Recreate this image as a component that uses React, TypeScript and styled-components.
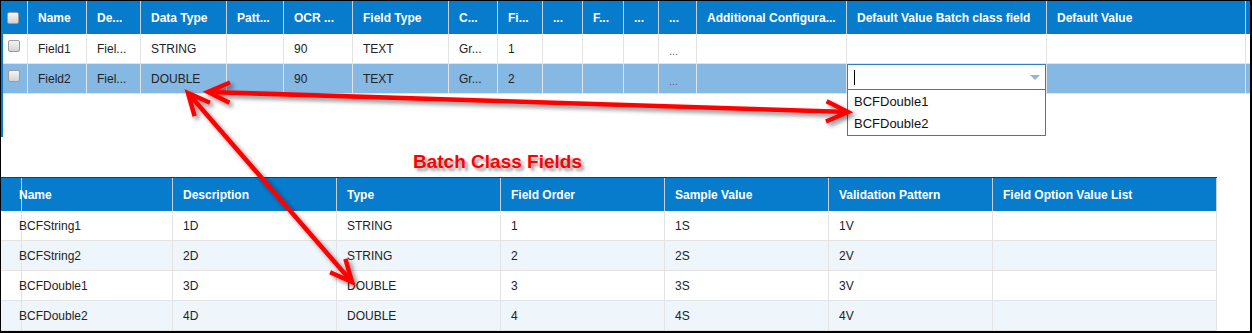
import React from "react";
import styled, { createGlobalStyle } from "styled-components";

const GlobalStyle = createGlobalStyle`
  html, body {
    margin: 0;
    padding: 0;
    background: #fff;
  }
  body {
    font-family: "Liberation Sans", Arial, sans-serif;
    font-size: 12px;
    color: #222;
  }
`;

const HEAD_BLUE = "#077bcc";
const LINE = "#e3e3e3";

const Frame = styled.div`
  position: relative;
  width: 1252px;
  height: 333px;
  box-sizing: border-box;
  border: 1px solid #000;
  border-right-width: 2px;
  border-bottom-width: 2px;
  background: #fff;
  overflow: hidden;
`;

const TopPanel = styled.div`
  height: 136px;
  box-sizing: border-box;
  border-left: 2px solid ${HEAD_BLUE};
`;

const GridRow = styled.div<{ $cols: string; $height: number; $bg?: string; $lined?: boolean }>`
  display: grid;
  grid-template-columns: ${(p) => p.$cols};
  height: ${(p) => p.$height}px;
  box-sizing: border-box;
  background: ${(p) => p.$bg || "#fff"};
  border-bottom: ${(p) => (p.$lined ? `1px solid ${LINE}` : "none")};
`;

const HeadCell = styled.div`
  display: flex;
  align-items: center;
  box-sizing: border-box;
  padding: 0 10px;
  border-right: 1px solid #c9cfd6;
  color: #fff;
  font-weight: bold;
  white-space: nowrap;
  overflow: hidden;
`;

const Cell = styled.div<{ $flush?: boolean }>`
  position: relative;
  display: flex;
  align-items: ${(p) => (p.$flush ? "flex-start" : "center")};
  box-sizing: border-box;
  padding: ${(p) => (p.$flush ? "0" : "0 10px")};
  border-right: 1px solid ${LINE};
  white-space: nowrap;
  overflow: ${(p) => (p.$flush ? "visible" : "hidden")};
`;

const CheckCell = styled.div<{ $head?: boolean }>`
  display: flex;
  align-items: ${(p) => (p.$head ? "center" : "flex-start")};
  box-sizing: border-box;
  padding: ${(p) => (p.$head ? "0 0 0 4px" : "6px 0 0 5px")};
  border-right: 1px solid ${(p) => (p.$head ? "#c9cfd6" : LINE)};
`;

const CheckBox = styled.span`
  display: block;
  width: 12px;
  height: 12px;
  box-sizing: border-box;
  border: 1px solid #9c9c9c;
  border-radius: 2px;
  background: linear-gradient(#f4f4f4, #d3d3d3);
`;

const Dots = styled.span`
  color: #6a5a7a;
  font-size: 11px;
  padding-top: 4px;
`;

const Combo = styled.div`
  position: relative;
  width: 199px;
  z-index: 2;
`;

const ComboInput = styled.div`
  display: flex;
  align-items: center;
  justify-content: space-between;
  height: 26px;
  box-sizing: border-box;
  padding: 0 5px 0 6px;
  background: #fff;
  border: 1px solid #2f7fc4;
`;

const Caret = styled.span`
  display: block;
  width: 1px;
  height: 15px;
  background: #000;
`;

const DropArrow = styled.span`
  display: block;
  width: 0;
  height: 0;
  border-left: 5px solid transparent;
  border-right: 5px solid transparent;
  border-top: 5px solid #93b5d5;
`;

const ComboList = styled.ul`
  position: absolute;
  top: 25px;
  left: 0;
  width: 199px;
  height: 47px;
  box-sizing: border-box;
  margin: 0;
  padding: 0;
  list-style: none;
  display: flex;
  flex-direction: column;
  background: #fff;
  border: 1px solid #2f7fc4;
`;

const ComboItem = styled.li`
  flex: 1;
  display: flex;
  align-items: center;
  padding-left: 6px;
  font-size: 13px;
  color: #111;
`;

const SectionTitle = styled.div`
  height: 40px;
  box-sizing: border-box;
  padding: 14px 0 0 412px;
  color: #ff0000;
  font-size: 19px;
  font-weight: bold;
  line-height: 22px;
  text-shadow: 3px 3px 3px rgba(0, 0, 0, 0.4);
`;

const BottomTable = styled.div`
  width: 1216px;
  border-top: 1px solid #2c3b49;
`;

const ArrowLayer = styled.svg`
  position: absolute;
  left: -1px;
  top: -1px;
  width: 1252px;
  height: 333px;
  pointer-events: none;
  z-index: 3;
`;

const topCols =
  "25px 59px 54px 86px 57px 69px 96px 49px 45px 40px 41px 35px 38px 150px 200px 199px";
const bottomCols = "8px 164px 164px 164px 164px 164px 164px 224px";

const topHeads = [
  "Name",
  "De...",
  "Data Type",
  "Patt...",
  "OCR ...",
  "Field Type",
  "C...",
  "Fi...",
  "...",
  "F...",
  "...",
  "...",
  "Additional Configura...",
  "Default Value Batch class field",
  "Default Value",
];

const topRows = [
  { cells: ["Field1", "Fiel...", "STRING", "", "90", "TEXT", "Gr...", "1", "", "", ""], selected: false },
  { cells: ["Field2", "Fiel...", "DOUBLE", "", "90", "TEXT", "Gr...", "2", "", "", ""], selected: true },
];

const bottomHeads = [
  "",
  "Name",
  "Description",
  "Type",
  "Field Order",
  "Sample Value",
  "Validation Pattern",
  "Field Option Value List",
];

const bottomRows = [
  ["", "BCFString1", "1D", "STRING", "1", "1S", "1V", ""],
  ["", "BCFString2", "2D", "STRING", "2", "2S", "2V", ""],
  ["", "BCFDouble1", "3D", "DOUBLE", "3", "3S", "3V", ""],
  ["", "BCFDouble2", "4D", "DOUBLE", "4", "4S", "4V", ""],
];

function head(tx: number, ty: number, dir: number) {
  const len = 24;
  const a = (25 * Math.PI) / 180;
  const p1 = [tx + len * Math.cos(dir + a), ty + len * Math.sin(dir + a)];
  const p2 = [tx + len * Math.cos(dir - a), ty + len * Math.sin(dir - a)];
  return `${p1[0]},${p1[1]} ${tx},${ty} ${p2[0]},${p2[1]}`;
}

const DoubleArrow = ({ x1, y1, x2, y2 }: { x1: number; y1: number; x2: number; y2: number }) => {
  const ang = Math.atan2(y2 - y1, x2 - x1);
  return (
    <g stroke="#ff0000" strokeWidth={4.5} fill="none" filter="url(#arrowShadow)">
      <line x1={x1} y1={y1} x2={x2} y2={y2} />
      <polyline points={head(x1, y1, ang)} strokeLinejoin="miter" />
      <polyline points={head(x2, y2, ang + Math.PI)} strokeLinejoin="miter" />
    </g>
  );
};

const BatchFieldCombo = () => (
  <Combo>
    <ComboInput>
      <Caret />
      <DropArrow />
    </ComboInput>
    <ComboList>
      <ComboItem>BCFDouble1</ComboItem>
      <ComboItem>BCFDouble2</ComboItem>
    </ComboList>
  </Combo>
);

export default function App() {
  return (
    <>
      <GlobalStyle />
      <Frame>
        <TopPanel>
          <GridRow $cols={topCols} $height={33} $bg={HEAD_BLUE}>
            <CheckCell $head>
              <CheckBox />
            </CheckCell>
            {topHeads.map((h, i) => (
              <HeadCell key={i}>{h}</HeadCell>
            ))}
          </GridRow>
          {topRows.map((row, r) => (
            <GridRow key={r} $cols={topCols} $height={30} $bg={row.selected ? "#85b9e3" : "#fff"} $lined>
              <CheckCell>
                <CheckBox />
              </CheckCell>
              {row.cells.map((c, i) => (
                <Cell key={i}>{c}</Cell>
              ))}
              <Cell>
                <Dots>...</Dots>
              </Cell>
              <Cell />
              <Cell $flush>{row.selected && <BatchFieldCombo />}</Cell>
              <Cell />
            </GridRow>
          ))}
        </TopPanel>

        <SectionTitle>Batch Class Fields</SectionTitle>

        <BottomTable>
          <GridRow $cols={bottomCols} $height={33} $bg={HEAD_BLUE}>
            {bottomHeads.map((h, i) => (
              <HeadCell key={i}>{h}</HeadCell>
            ))}
          </GridRow>
          {bottomRows.map((row, r) => (
            <GridRow key={r} $cols={bottomCols} $height={30} $bg={r % 2 ? "#eef5fb" : "#fff"} $lined>
              {row.map((c, i) => (
                <Cell key={i}>{c}</Cell>
              ))}
            </GridRow>
          ))}
        </BottomTable>

        <ArrowLayer viewBox="0 0 1252 333">
          <defs>
            <filter id="arrowShadow" x="-10%" y="-10%" width="130%" height="130%">
              <feDropShadow dx="3" dy="3" stdDeviation="2" floodColor="#000" floodOpacity="0.45" />
            </filter>
          </defs>
          <DoubleArrow x1={208} y1={92} x2={848} y2={112} />
          <DoubleArrow x1={188} y1={93} x2={352} y2={282} />
        </ArrowLayer>
      </Frame>
    </>
  );
}
